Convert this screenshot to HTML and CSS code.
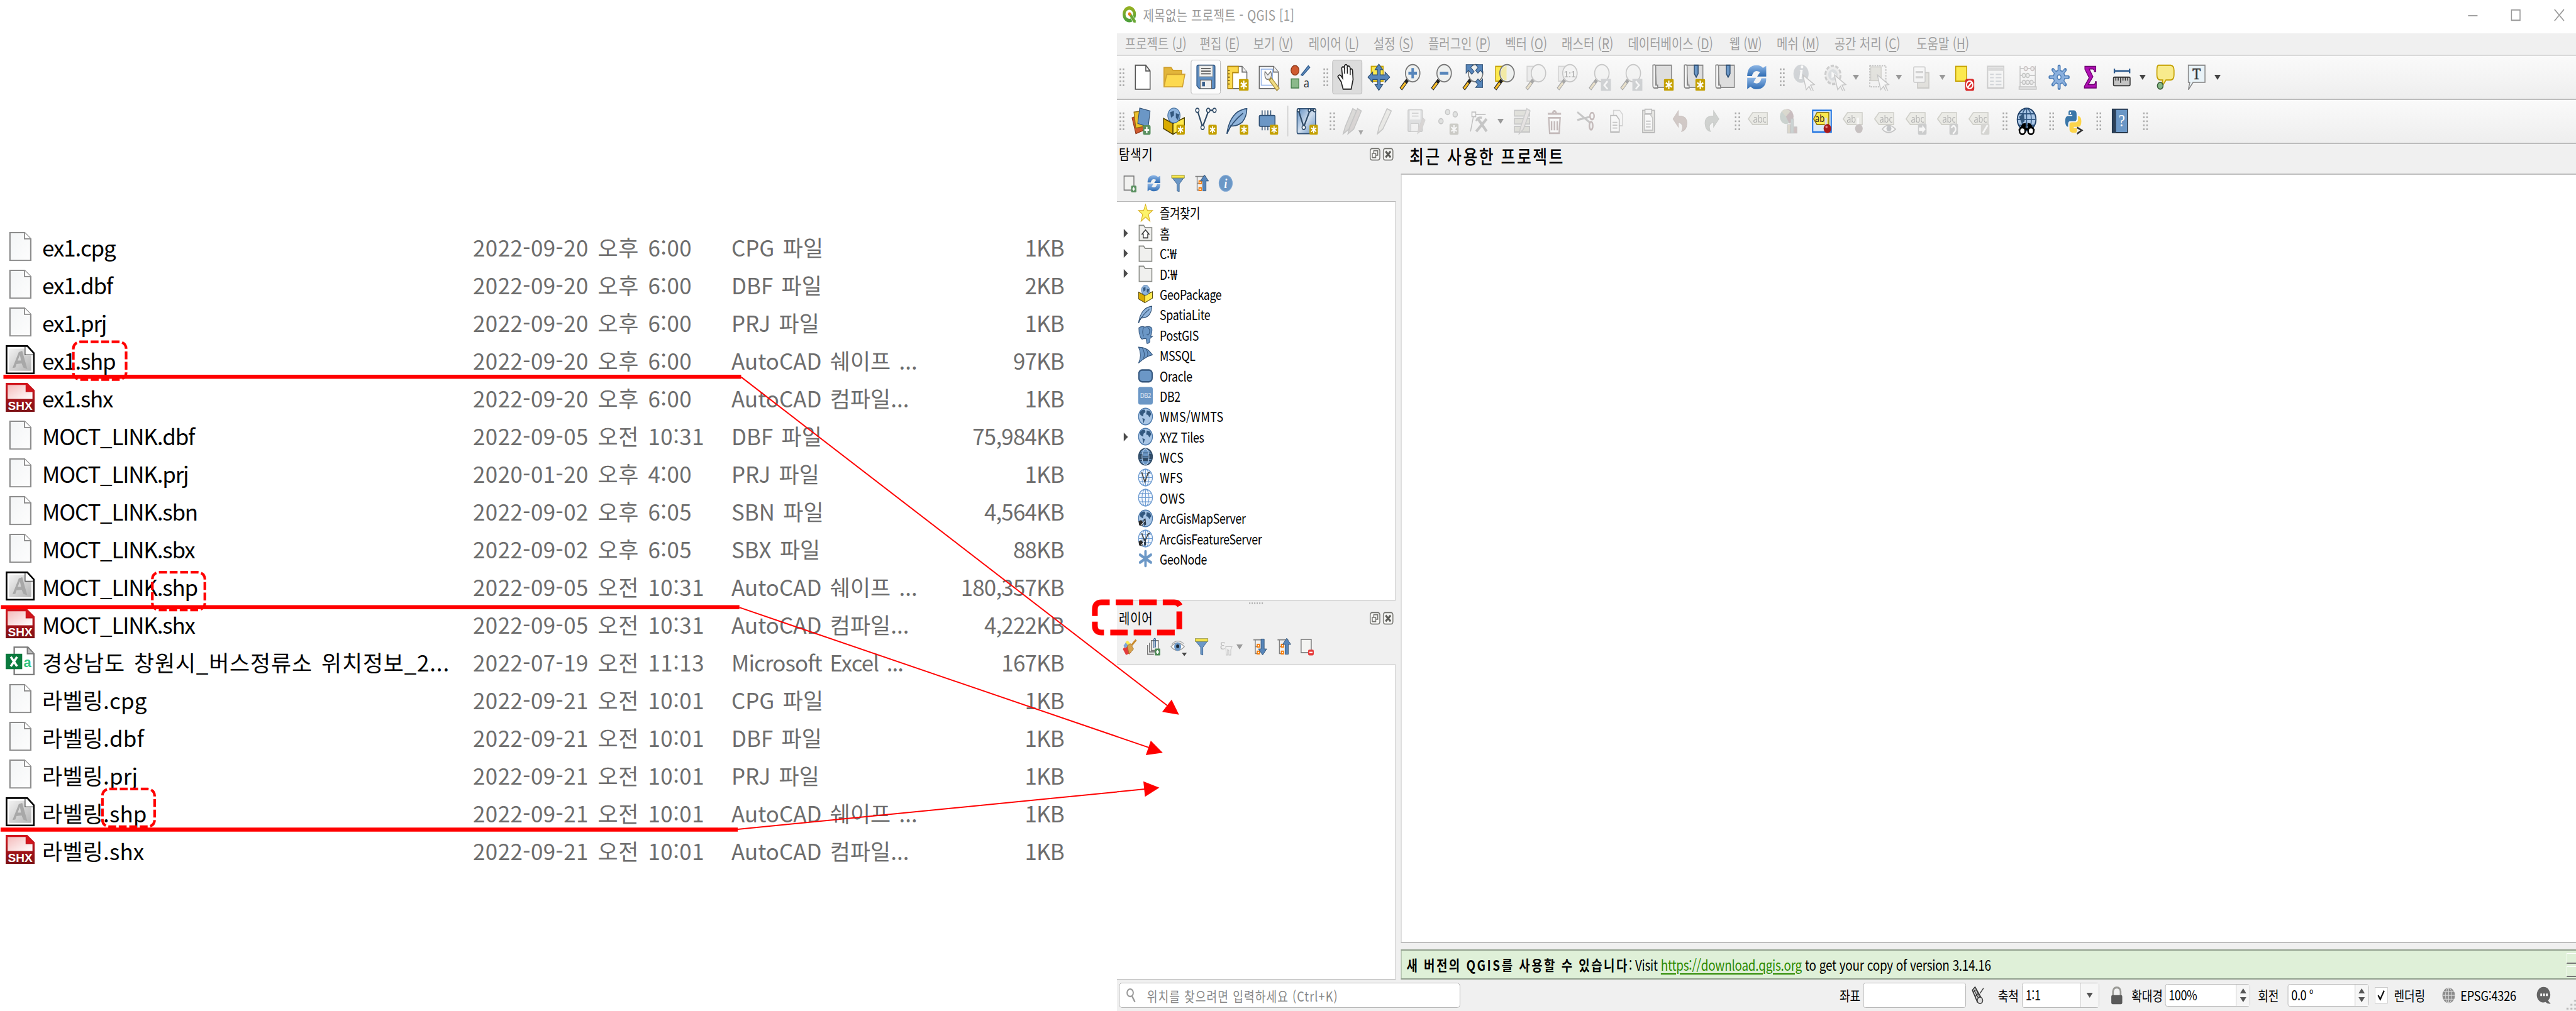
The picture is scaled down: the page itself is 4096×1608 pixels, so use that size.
FILE: index.html
```html
<!DOCTYPE html>
<html lang="ko">
<head>
<meta charset="utf-8">
<title>QGIS</title>
<link rel="stylesheet" href="styles.css">
</head>
<body>
<svg class="defs" width="0" height="0">
  <defs>
    <linearGradient id="g-doc" x1="0" y1="0" x2="1" y2="1"><stop offset="0" stop-color="#f3f5f6"/><stop offset="1" stop-color="#fdfdfd"/></linearGradient>
    <linearGradient id="g-shp" x1="0" y1="0" x2="1" y2="1"><stop offset="0" stop-color="#f2f2f2"/><stop offset="1" stop-color="#b4b4b4"/></linearGradient>
    <linearGradient id="g-shx" x1="0" y1="0" x2="1" y2="1"><stop offset="0" stop-color="#f4bcbc"/><stop offset="1" stop-color="#fff"/></linearGradient>
    <linearGradient id="g-red" x1="0" y1="0" x2="0" y2="1"><stop offset="0" stop-color="#d4141c"/><stop offset="1" stop-color="#7c1216"/></linearGradient>
    <linearGradient id="g-vec" x1="0" y1="0" x2="1" y2="1"><stop offset="0" stop-color="#5d8cc0"/><stop offset=".5" stop-color="#cfdded"/><stop offset="1" stop-color="#5d8cc0"/></linearGradient>
    <linearGradient id="g-ref" x1="0" y1="0" x2="0" y2="1"><stop offset="0" stop-color="#8db6e6"/><stop offset="1" stop-color="#2f6cb3"/></linearGradient>
    <linearGradient id="g-q" x1="0" y1="0" x2="0" y2="1"><stop offset="0" stop-color="#93b023"/><stop offset="1" stop-color="#4fa03a"/></linearGradient>
  </defs>
  <symbol id="file" viewBox="0 0 51 51"><path d="M7.500 1H33L44 12V50H7.500Z" fill="url(#g-doc)" stroke="#8c8c8c" stroke-width="2.400"/><path d="M33 1V12H44" fill="#fff" stroke="#8c8c8c" stroke-width="2"/></symbol>
  <symbol id="shp" viewBox="0 0 51 51"><path d="M1.500 1.500H38L49.500 14V49.500H1.500Z" fill="#fff" stroke="#000" stroke-width="3"/><path d="M6 6H33V18H45V45H6Z" fill="url(#g-shp)"/><path d="M34 3V17H48" fill="#fff" stroke="#444" stroke-width="1.500"/><path d="M12 40L23 12L29 10L38 42L31 39L28 32L19 33L17 39Z M21 27H27L25 17Z" fill="#a8a8a8" fill-rule="evenodd"/></symbol>
  <symbol id="shx" viewBox="0 0 51 51"><path d="M0 0H38L51 13V51H0Z" fill="url(#g-red)"/><path d="M3.500 3.500H35V16H47V28H3.500Z" fill="url(#g-shx)"/><path d="M36 1L50 15H36Z" fill="#d4141c"/></symbol>

  <symbol id="new" viewBox="0 0 10 10"><rect width="10" height="10" rx="1.500" fill="#c4a000"/><path d="M5 1.500V8.500M2 3.200L8 6.800M8 3.200L2 6.800" stroke="#fff" stroke-width="1.300"/></symbol>
  <symbol id="lens" viewBox="0 0 24 24"><path d="M9 14.500L2 22.500" stroke="#222" stroke-width="3.400"/><path d="M7 17L2.400 22" stroke="#fbc02d" stroke-width="2"/><circle cx="14.500" cy="8.500" r="7.600" fill="#eef0ef" stroke="#777" stroke-width="1.100"/></symbol>
  <symbol id="page" viewBox="0 0 24 24"><path d="M2 2.500H17L22 7.500V22H2Z" fill="#fff" stroke="#6b6b6b"/><path d="M17 2.500V7.500H22" fill="#eee" stroke="#6b6b6b"/></symbol>
  <symbol id="book" viewBox="0 0 24 24"><path d="M4 1.500H21.500V21H6Z" fill="#dedede" stroke="#888"/><path d="M2 1.500Q5 .5 5 3V19H7V21.500H3.500Q2 21.500 2 19Z" fill="#f3f3f3" stroke="#888"/></symbol>
  <symbol id="refresh" viewBox="0 0 24 24"><path d="M2 11Q2 1.500 12 1.500Q16 1.500 18.500 3.800L22 2V11.500H12.500L15.500 7.500Q9 4.500 7 11Z" fill="url(#g-ref)"/><path d="M22 13Q22 22.500 12 22.500Q8 22.500 5.500 20.200L2 22.500V12.500H11.500L8.500 16.500Q15 19.500 17 13Z" fill="url(#g-ref)"/></symbol>
  <symbol id="globe" viewBox="0 0 24 24"><circle cx="12" cy="12" r="11" fill="#a9c6e6" stroke="#4a78ab" stroke-width="1.300"/><path d="M3 6Q7 2 11 3L12 6L9 8L8 12L4 10ZM14 4Q20 4 21 9L18 13L16 10L13 9ZM7 14L11 15L9 21Z" fill="#33587f"/></symbol>
  <symbol id="grid" viewBox="0 0 24 24"><circle cx="12" cy="12" r="11" fill="#f2f7fd" stroke="#6d9bd1" stroke-width="1.300"/><path d="M1 12H23M12 1V23M3 6.500H21M3 17.500H21" stroke="#6d9bd1" fill="none"/><ellipse cx="12" cy="12" rx="5.500" ry="11" fill="none" stroke="#6d9bd1"/></symbol>
  <symbol id="arc" viewBox="0 0 24 24"><path d="M1 16L5 14L8 17L7 22L2 21Z" fill="#2b2b2b"/><path d="M9 13L12 12L13 20L10 22Z" fill="#2b3c50"/><path d="M5 21L11 15" stroke="#eee"/></symbol>
  <symbol id="box" viewBox="0 0 24 24"><path d="M1 9.500L11 14V23.500L1 18.500Z" fill="#d9ab00" stroke="#4d4000" stroke-width=".9"/><path d="M11 14L23 9V17.500L11 23.500Z" fill="#ffe94e" stroke="#4d4000" stroke-width=".9"/><circle cx="12" cy="7" r="6.500" fill="#8db3dc" stroke="#44709f" stroke-width=".7"/><path d="M8 4L12 3L12 7L9 9ZM14 5L18 6L16 11L14 9Z" fill="#33587f"/></symbol>
  <symbol id="feather" viewBox="0 0 24 24"><path d="M1 23Q3 10 12 4Q18 1 22 1Q22 8 17 13Q11 17 5 16Z" fill="#8fb3da" stroke="#2f4f73"/><path d="M1 23Q6 13 18 5" stroke="#2f4f73" fill="none"/></symbol>
  <symbol id="vee" viewBox="0 0 24 24"><path d="M3 2.500L8.500 17L15 2.500H21" fill="none" stroke="#2f4a66" stroke-width="1.400"/><g fill="#fff" stroke="#2f4a66"><circle cx="3" cy="2.500" r="1.800"/><circle cx="8.500" cy="17.500" r="1.800"/><circle cx="14.500" cy="2.500" r="1.800"/><circle cx="21" cy="2.500" r="1.800"/></g></symbol>
  <symbol id="folder" viewBox="0 0 24 24"><path d="M2 2H9L11.500 5H22V22H2Z" fill="#f0f0ee" stroke="#888a85" stroke-width="1.500"/></symbol>
  <symbol id="funnel" viewBox="0 0 24 24"><path d="M2 4H22L14 13V23L10.500 22V13Z" fill="#6b97c6" stroke="#3a6190" stroke-width=".8"/><rect x="2" y="1.500" width="20" height="3.500" fill="#fce94f" stroke="#8a8a30" stroke-width=".8"/></symbol>
  <symbol id="tag" viewBox="0 0 24 24"><path d="M1 10L5.500 4.500H21V15H5.500Z" fill="#dcdcb8" stroke="#909068"/></symbol>
  <symbol id="upbox" viewBox="0 0 24 24"><path d="M2 3H19M5 3V21H9M5 12H9" stroke="#808080" fill="none" stroke-width="1.300"/><g fill="#fff" stroke="#f57900" stroke-width="1.600"><rect x="8" y="9" width="3.500" height="3.500"/><rect x="8" y="18" width="3.500" height="3.500"/></g></symbol>
  <symbol id="cursor" viewBox="0 0 24 24"><path d="M11 10L23 18.500L19 19L22 24L20 24.500L17.500 20L14.500 23Z" fill="#fff" stroke="#777" stroke-width=".9"/></symbol>
  <symbol id="float" viewBox="0 0 22 22"><rect x="1.300" y="1.300" width="19.400" height="19.400" rx="4" fill="#f6f6f4" stroke="#747470" stroke-width="1.900"/><path d="M8.500 9V5H16.500V12.500H13M5.500 9.500H12.500V16.500H5.500Z" fill="none" stroke="#747470" stroke-width="1.800"/></symbol>
  <symbol id="shut" viewBox="0 0 22 22"><rect x="1.300" y="1.300" width="19.400" height="19.400" rx="4" fill="#f6f6f4" stroke="#747470" stroke-width="1.900"/><path d="M6 6L16 16M16 6L6 16" stroke="#5c5c58" stroke-width="3.600"/></symbol>
</svg>

<main class="stage">
  <section class="files">
    <div class="row"><svg><use href="#file"/></svg><span class="name">ex1.cpg</span><span class="date">2022-09-20 오후 6:00</span><span class="type">CPG 파일</span><span class="size">1KB</span></div>
    <div class="row"><svg><use href="#file"/></svg><span class="name">ex1.dbf</span><span class="date">2022-09-20 오후 6:00</span><span class="type">DBF 파일</span><span class="size">2KB</span></div>
    <div class="row"><svg><use href="#file"/></svg><span class="name">ex1.prj</span><span class="date">2022-09-20 오후 6:00</span><span class="type">PRJ 파일</span><span class="size">1KB</span></div>
    <div class="row"><svg><use href="#shp"/></svg><span class="name">ex1.shp</span><span class="date">2022-09-20 오후 6:00</span><span class="type">AutoCAD 쉐이프 ...</span><span class="size">97KB</span></div>
    <div class="row"><svg viewBox="0 0 51 51"><use href="#shx" width="51" height="51"/><text x="25.500" y="47.500" text-anchor="middle" class="t-shx">SHX</text></svg><span class="name">ex1.shx</span><span class="date">2022-09-20 오후 6:00</span><span class="type">AutoCAD 컴파일...</span><span class="size">1KB</span></div>
    <div class="row"><svg><use href="#file"/></svg><span class="name">MOCT_LINK.dbf</span><span class="date">2022-09-05 오전 10:31</span><span class="type">DBF 파일</span><span class="size">75,984KB</span></div>
    <div class="row"><svg><use href="#file"/></svg><span class="name">MOCT_LINK.prj</span><span class="date">2020-01-20 오후 4:00</span><span class="type">PRJ 파일</span><span class="size">1KB</span></div>
    <div class="row"><svg><use href="#file"/></svg><span class="name">MOCT_LINK.sbn</span><span class="date">2022-09-02 오후 6:05</span><span class="type">SBN 파일</span><span class="size">4,564KB</span></div>
    <div class="row"><svg><use href="#file"/></svg><span class="name">MOCT_LINK.sbx</span><span class="date">2022-09-02 오후 6:05</span><span class="type">SBX 파일</span><span class="size">88KB</span></div>
    <div class="row"><svg><use href="#shp"/></svg><span class="name">MOCT_LINK.shp</span><span class="date">2022-09-05 오전 10:31</span><span class="type">AutoCAD 쉐이프 ...</span><span class="size">180,357KB</span></div>
    <div class="row"><svg viewBox="0 0 51 51"><use href="#shx" width="51" height="51"/><text x="25.500" y="47.500" text-anchor="middle" class="t-shx">SHX</text></svg><span class="name">MOCT_LINK.shx</span><span class="date">2022-09-05 오전 10:31</span><span class="type">AutoCAD 컴파일...</span><span class="size">4,222KB</span></div>
    <div class="row"><svg viewBox="0 0 51 51"><path d="M15 1.500H39L49.500 13V49.500H15Z" fill="#fff" stroke="#7b7b7b" stroke-width="2.600"/><path d="M38 2V13H49" fill="#bbb" stroke="#777" stroke-width="2"/><rect y="13" width="29" height="27" fill="#0a7a3e"/><path d="M9 18.500L20 35M20 18.500L9 35" stroke="#fff" stroke-width="4"/><text x="38" y="36" text-anchor="middle" class="t-csv">a</text></svg><span class="name long">경상남도 창원시_버스정류소 위치정보_2...</span><span class="date">2022-07-19 오전 11:13</span><span class="type latin">Microsoft Excel ...</span><span class="size">167KB</span></div>
    <div class="row"><svg><use href="#file"/></svg><span class="name ko">라벨링.cpg</span><span class="date">2022-09-21 오전 10:01</span><span class="type">CPG 파일</span><span class="size">1KB</span></div>
    <div class="row"><svg><use href="#file"/></svg><span class="name ko">라벨링.dbf</span><span class="date">2022-09-21 오전 10:01</span><span class="type">DBF 파일</span><span class="size">1KB</span></div>
    <div class="row"><svg><use href="#file"/></svg><span class="name ko">라벨링.prj</span><span class="date">2022-09-21 오전 10:01</span><span class="type">PRJ 파일</span><span class="size">1KB</span></div>
    <div class="row"><svg><use href="#shp"/></svg><span class="name ko">라벨링.shp</span><span class="date">2022-09-21 오전 10:01</span><span class="type">AutoCAD 쉐이프 ...</span><span class="size">1KB</span></div>
    <div class="row"><svg viewBox="0 0 51 51"><use href="#shx" width="51" height="51"/><text x="25.500" y="47.500" text-anchor="middle" class="t-shx">SHX</text></svg><span class="name ko">라벨링.shx</span><span class="date">2022-09-21 오전 10:01</span><span class="type">AutoCAD 컴파일...</span><span class="size">1KB</span></div>
  </section>

  <section class="qgis">
    <header class="titlebar">
      <svg class="logo" viewBox="0 0 30 30"><circle cx="14" cy="14" r="11" fill="none" stroke="url(#g-q)" stroke-width="6"/><path d="M13 12L17 11L28 25V29H23L14 17Z" fill="#6aa834" stroke="#fff" stroke-width=".8"/><circle cx="14.500" cy="13.500" r="3" fill="#ee7913"/></svg>
      <span class="caption">제목없는 프로젝트 - QGIS [1]</span>
      <svg class="win" viewBox="0 0 20 20"><path d="M0 11H20" stroke="#999" stroke-width="2"/></svg>
      <svg class="win" viewBox="0 0 20 20"><path d="M1 1H19V19H1Z" stroke="#999" stroke-width="2" fill="none"/></svg>
      <svg class="win" viewBox="0 0 20 20"><path d="M0 0L20 20M20 0L0 20" stroke="#999" stroke-width="2"/></svg>
    </header>
    <nav class="menu">
      <span>프로젝트 (<u>J</u>)</span><span>편집 (<u>E</u>)</span><span>보기 (<u>V</u>)</span><span>레이어 (<u>L</u>)</span><span>설정 (<u>S</u>)</span><span>플러그인 (<u>P</u>)</span><span>벡터 (<u>O</u>)</span><span>래스터 (<u>R</u>)</span><span>데이터베이스 (<u>D</u>)</span><span>웹 (<u>W</u>)</span><span>메쉬 (<u>M</u>)</span><span>공간 처리 (<u>C</u>)</span><span>도움말 (<u>H</u>)</span>
    </nav>

    <div class="toolbar">
      <i class="grip first"></i>
      <b><svg viewBox="0 0 24 24"><path d="M4.500 1.500H15.500L20 6.500V22.500H4.500Z" fill="#fff" stroke="#555"/><path d="M15.500 1.500V6.500H20" fill="none" stroke="#555"/></svg></b>
      <b><svg viewBox="0 0 24 24"><path d="M1.500 20.500V3.500H9L11 6H20V20.500Z" fill="#e2b53a" stroke="#cf9d27"/><path d="M1.500 20.500L4.500 9.500H23.500L21 20.500Z" fill="#fcd94f" stroke="#cfa030"/></svg></b>
      <b class="boxed"><svg viewBox="0 0 24 24"><path d="M2.500 3Q2.500 1.500 4 1.500H20Q21.500 1.500 21.500 3V21Q21.500 22 20 22H5L2.500 19.500Z" fill="#5f8fc3" stroke="#395f8b"/><rect x="5" y="2" width="14" height="9.500" fill="#eeeeec" stroke="#999" stroke-width=".5"/><path d="M7 4.500H17M7 6.700H17M7 9H17" stroke="#555"/><rect x="6" y="14.500" width="12" height="7.500" fill="#eee" stroke="#555" stroke-width=".6"/><rect x="8" y="16" width="3" height="4" fill="#395f8b"/></svg></b>
      <b><svg viewBox="0 0 24 24"><use href="#page" width="24" height="24"/><path d="M2 2.500H13V8H7V22H2Z" fill="#fcd94f" stroke="#b58a10"/><path d="M2 6H4M2 9H4M2 12H4M2 15H4M2 18H4" stroke="#7c6210"/><use href="#new" x="13.500" y="13.500" width="10.500" height="10.500"/></svg></b>
      <b><svg viewBox="0 0 24 24"><use href="#page" width="24" height="24"/><path d="M4 5H16V19H4Z" fill="none" stroke="#8fb0e8" stroke-width=".8"/><path d="M8 7L11 10L14 7Q16 11 13 13.500L10 14Q7 12 8 7Z" fill="#eee" stroke="#777" stroke-width=".8"/><path d="M13 13L22 23" stroke="#a38a3c" stroke-width="4"/><path d="M14 14L21.500 22.500" stroke="#f0dc82" stroke-width="2.500"/></svg></b>
      <b><svg viewBox="0 0 24 24"><circle cx="6.500" cy="6" r="4.200" fill="#cf5a30" stroke="#8e3515" stroke-width=".8"/><path d="M13 10L20.500 2L22 3.500L14.500 10.500Z" fill="#6b97c6" stroke="#2f5c8f" stroke-width=".9"/><rect x="2.500" y="13.500" width="8" height="8" fill="#8bb98b" stroke="#3f7a45" stroke-width=".8"/><text x="18.500" y="21" text-anchor="middle" class="t-a">a</text></svg></b>
      <i class="grip"></i>
      <b class="pressed"><svg viewBox="0 0 24 24"><path d="M8 22.500L6 16L2.500 11.500Q3.500 9 6 11L7.500 13L6.500 4Q8 1.500 9.500 4L9.500 2Q11 0 12.500 2V3Q14.500 1 15.500 4V5Q18 4 18 7L18.500 14L16.500 22.500Z" fill="#fff" stroke="#222" stroke-width="1.100"/><path d="M9.500 4V9M12.500 3.500V9M15.500 5V10" stroke="#222"/></svg></b>
      <b><svg viewBox="0 0 24 24"><rect x="4" y="2.500" width="12.500" height="13" fill="#fce94f" stroke="#c4a000"/><path d="M12 .5L16 5.500H13.500V10H18.500V7.500L23.500 12L18.500 16.500V14H13.500V18.500H16L12 23.500L8 18.500H10.500V14H5.500V16.500L.5 12L5.500 7.500V10H10.500V5.500H8Z" fill="#5786bb" stroke="#2f4f73" stroke-width=".7"/></svg></b>
      <b><svg viewBox="0 0 24 24"><use href="#lens" width="24" height="24"/><path d="M14.500 4V13M10 8.500H19" stroke="#5786bb" stroke-width="2.600"/></svg></b>
      <b><svg viewBox="0 0 24 24"><use href="#lens" width="24" height="24"/><path d="M10 8.500H19" stroke="#5786bb" stroke-width="2.600"/></svg></b>
      <b><svg viewBox="0 0 24 24"><use href="#lens" width="24" height="24"/><path d="M4.500 1H12L9.500 3.500L13 7L10.500 9.500L7 6L4.500 8.500ZM22 1V8.500L19.500 6L17 8.500L14.500 6L17 3.500L14.500 1ZM22 21H14.500L17 18.500L14.500 16L17 13.500L19.500 16L22 13.500Z" fill="#5786bb" stroke="#2f4f73" stroke-width=".6"/></svg></b>
      <b><svg viewBox="0 0 24 24"><rect x="2.500" y="2.500" width="10" height="13" fill="#fce94f" stroke="#c4a000"/><use href="#lens" width="24" height="24"/><path d="M14 2V15Q8.500 14 8 8.500Q8.500 3 14 2Z" fill="#f2eaa5"/></svg></b>
      <b class="off"><svg viewBox="0 0 24 24"><rect x="2.500" y="2.500" width="10" height="13" fill="#ddd" stroke="#999"/><use href="#lens" width="24" height="24"/></svg></b>
      <b class="off"><svg viewBox="0 0 24 24"><rect x="2.500" y="2.500" width="10" height="13" fill="#ddd" stroke="#999"/><use href="#lens" width="24" height="24"/><text x="14.500" y="12" text-anchor="middle" class="t-11">1:1</text></svg></b>
      <b class="off"><svg viewBox="0 0 24 24"><use href="#lens" width="24" height="24"/><rect x="13.500" y="13.500" width="10.500" height="10.500" fill="#8c9aa8"/><path d="M20.500 15.500L17 19L20.500 22.500" stroke="#fff" stroke-width="1.600" fill="none"/></svg></b>
      <b class="off"><svg viewBox="0 0 24 24"><use href="#lens" width="24" height="24"/><rect x="13.500" y="13.500" width="10.500" height="10.500" fill="#8c9aa8"/><path d="M17 15.500L20.500 19L17 22.500" stroke="#fff" stroke-width="1.600" fill="none"/></svg></b>
      <b><svg viewBox="0 0 24 24"><use href="#book" width="24" height="24"/><use href="#new" x="13.500" y="13.500" width="10.500" height="10.500"/></svg></b>
      <b><svg viewBox="0 0 24 24"><use href="#book" width="24" height="24"/><path d="M12.500 1.500H16.500V9L14.500 12L12.500 9Z" fill="#6b97c6" stroke="#2f4f73"/><use href="#new" x="13.500" y="13.500" width="10.500" height="10.500"/></svg></b>
      <b><svg viewBox="0 0 24 24"><use href="#book" width="24" height="24"/><path d="M13 1.500H17V9L15 12L13 9Z" fill="#6b97c6" stroke="#2f4f73"/></svg></b>
      <b><svg viewBox="0 0 24 24"><use href="#refresh" width="24" height="24"/></svg></b>
      <i class="grip"></i>
      <b class="off"><svg viewBox="0 0 24 24"><circle cx="9" cy="9" r="8" fill="#8a9cb0"/><text x="9" y="14" text-anchor="middle" class="t-i">i</text><use href="#cursor" width="24" height="24"/></svg></b>
      <b class="off"><svg viewBox="0 0 24 24"><circle cx="9.500" cy="10" r="8" fill="#ddd" stroke="#888" stroke-width="2" stroke-dasharray="3.500 1.500"/><circle cx="9.500" cy="10" r="5" fill="#a5b5c5"/><path d="M8 7V13L13 10Z" fill="#fff"/><use href="#cursor" width="24" height="24"/></svg></b><em class="dim"></em>
      <b class="off"><svg viewBox="0 0 24 24"><rect x="3" y="2" width="17" height="18.500" fill="none" stroke="#555" stroke-dasharray="1.500 1"/><rect x="4" y="3" width="11" height="12" fill="#c8c3a5" stroke="#99957c"/><use href="#cursor" width="24" height="24"/></svg></b><em class="dim"></em>
      <b class="off"><svg viewBox="0 0 24 24"><rect x="8" y="8" width="12" height="13.500" fill="#c8c3a5" stroke="#86826c"/><rect x="4" y="3" width="12" height="13.500" rx="1" fill="#f6f6f6" stroke="#888"/><path d="M6 7.500H14M6 12H14" stroke="#999" stroke-width="1.800"/></svg></b><em class="dim"></em>
      <b><svg viewBox="0 0 24 24"><rect x="3" y="2.500" width="11.500" height="13" fill="#fce94f" stroke="#c4a000"/><rect x="13" y="13.500" width="9.500" height="10.500" rx="2" fill="#d92b2b"/><circle cx="17.700" cy="18.700" r="3.300" fill="none" stroke="#fff" stroke-width="1.300"/><path d="M15.500 21L20 16.500" stroke="#fff" stroke-width="1.300"/></svg></b>
      <b class="off"><svg viewBox="0 0 24 24"><rect x="3.500" y="2.500" width="17" height="19" fill="#f4f4f4" stroke="#888" stroke-width="1.200"/><path d="M4 5H20" stroke="#aaa" stroke-width="3"/><path d="M6 9.500H10M12 9.500H18M6 12.500H10M12 12.500H18M6 15.500H10M12 15.500H18M6 18.500H10M12 18.500H18" stroke="#8aa0b8"/></svg></b>
      <b class="off"><svg viewBox="0 0 24 24"><path d="M4 2V21M20 2V21M4 4.500H20M4 10.500H20M4 16.500H20" stroke="#777" fill="none"/><g fill="#ddd" stroke="#a06060"><circle cx="10" cy="4.500" r="1.800"/><circle cx="17" cy="4.500" r="1.800"/></g><g fill="#ddd" stroke="#708070"><circle cx="8" cy="10.500" r="1.800"/><circle cx="12" cy="10.500" r="1.800"/></g><g fill="#ddd" stroke="#777"><circle cx="8" cy="16.500" r="1.800"/><circle cx="12" cy="16.500" r="1.800"/><circle cx="16" cy="16.500" r="1.800"/></g><rect x="3" y="20.500" width="18" height="2" fill="#ddd" stroke="#777"/></svg></b>
      <b><svg viewBox="0 0 24 24"><g stroke="#4f7fb8" stroke-width="3.200" stroke-linecap="round"><path d="M12 2.500V21.500M2.500 12H21.500M5.500 5.500L18.500 18.500M18.500 5.500L5.500 18.500"/></g><circle cx="12" cy="12" r="6" fill="#8bb0de" stroke="#4f7fb8"/><path d="M12 3V21M3 12H21M6 6L18 18M18 6L6 18" stroke="#8bb0de" stroke-width="1.600" stroke-linecap="round"/><circle cx="12" cy="12" r="2" fill="#fff" stroke="#4f7fb8"/></svg></b>
      <b><svg viewBox="0 0 24 24"><path d="M6 2.500H17.500V7H16Q16 4.800 14 4.800H10.500L14.500 11.500L9.500 18.500H15Q17 18.500 17 16H18V21.500H5.500V20L10.500 12.500L6 5Z" fill="#b010b4" stroke="#6a006e" stroke-width=".8"/></svg></b>
      <b><svg viewBox="0 0 24 24"><path d="M4 6.500H20M4 4.500V8.500M20 4.500V8.500" stroke="#2f5c8f" stroke-width="1.500"/><rect x="3" y="12" width="17.500" height="7.500" rx="1" fill="#c4c4c4" stroke="#333"/><path d="M5.500 12V15M8 12V15M10.500 12V17M13 12V15M15.500 12V15M18 12V15" stroke="#333"/></svg></b><em></em>
      <b><svg viewBox="0 0 24 24"><path d="M5 1.500H18Q21.500 2 21.500 6V10Q21.500 14 18 14.500H13L9 20L9.500 14.500H7Q3.500 14 3.500 10V6Q3.500 2 5 1.500Z" fill="#f8eb8c" stroke="#c4a000" stroke-width="1.100"/><circle cx="7" cy="19.500" r="3" fill="#86b886" stroke="#3b5e3b"/></svg></b>
      <b><svg viewBox="0 0 24 24"><path d="M3.500 1.500H21V16.500H8.500L3.500 23L5 16.500H3.500Z" fill="#e9f3f8" stroke="#888"/><text x="12.200" y="14" text-anchor="middle" class="t-t">T</text></svg></b><em></em>
    </div>

    <div class="toolbar second">
      <i class="grip first"></i>
      <b><svg viewBox="0 0 24 24"><path d="M1 9L10 6L16 19L5 23Z" fill="#cf5a30" stroke="#8e3515" stroke-width=".7"/><path d="M3 4L13 3L17 16L5 18Z" fill="#eec22c" stroke="#8e6b10" stroke-width=".7"/><path d="M9 .5L20 3L18 17L7 14Z" fill="#6b97c6" stroke="#2f4f73" stroke-width=".7"/><rect x="12.500" y="15.500" width="8" height="8.500" rx="1.500" fill="#5a9060"/><path d="M16.500 17V22.500M14 19.700H19" stroke="#fff" stroke-width="1.500"/></svg></b>
      <b><svg viewBox="0 0 24 24"><use href="#box" width="24" height="24"/><use href="#new" x="14.500" y="15" width="9" height="9"/></svg></b>
      <b><svg viewBox="0 0 24 24"><use href="#vee" width="24" height="24"/><use href="#new" x="14.500" y="15" width="9" height="9"/></svg></b>
      <b><svg viewBox="0 0 24 24"><use href="#feather" width="24" height="24"/><use href="#new" x="14.500" y="15" width="9" height="9"/></svg></b>
      <b><svg viewBox="0 0 24 24"><path d="M5 2.500V20M8 2.500V20M11 2.500V20M14 2.500V20" stroke="#2f4f73"/><rect x="2" y="7" width="16.500" height="9.500" rx="1" fill="#6b97c6" stroke="#2f4f73"/><use href="#new" x="13" y="15" width="9" height="9"/></svg></b>
      <i class="rule"></i>
      <b><svg viewBox="0 0 24 24"><rect x="1.500" y="1" width="19.500" height="22" rx="1.500" fill="url(#g-vec)" stroke="#2f4f73"/><path d="M3 2.500L8.500 17L15 2.500H20" fill="none" stroke="#2f4a66" stroke-width="1.400"/><g fill="#fff" stroke="#2f4a66"><circle cx="3" cy="2.500" r="1.300"/><circle cx="8.500" cy="17.500" r="1.800"/><circle cx="14.500" cy="2.500" r="1.300"/><circle cx="20" cy="2.500" r="1.300"/></g><use href="#new" x="14.500" y="15" width="9" height="9"/></svg></b>
      <i class="grip wide"></i>
      <b class="off"><svg viewBox="0 0 24 24"><path d="M1 23L3 17L11 1L15 3L7 19Z" fill="#b0a8a0" stroke="#777"/><path d="M6 23L8 17L16 1L20 3L12 19Z" fill="#b59c98" stroke="#777"/><path d="M17 20H22L19.500 24Z" fill="#222"/></svg></b>
      <b class="off"><svg viewBox="0 0 24 24"><path d="M4 23L5.500 17L14 1L18.500 3L9.500 19Z" fill="#d8d6c0" stroke="#777"/></svg></b>
      <b class="off"><svg viewBox="0 0 24 24"><rect x="3" y="2" width="15" height="19" rx="1" fill="#b5bcc4" stroke="#888"/><rect x="5" y="2.500" width="11" height="8" fill="#eee"/><path d="M7 5H14M7 7.500H14" stroke="#999"/><rect x="6" y="14" width="8" height="7" fill="#eee" stroke="#888" stroke-width=".6"/><path d="M13 23L14 18L18.500 9L21 11L17 20Z" fill="#b59c98" stroke="#999" stroke-width=".6"/></svg></b>
      <b class="off"><svg viewBox="0 0 24 24"><g fill="#b9c4bb" stroke="#777"><circle cx="11" cy="4" r="2.300"/><circle cx="19" cy="6" r="2.300"/><circle cx="4" cy="12" r="2.300"/></g><rect x="13" y="14" width="9.500" height="10" rx="1.500" fill="#8c8968"/><path d="M17.700 15.500V22.500M14.800 17.200L20.600 20.800M20.600 17.200L14.800 20.800" stroke="#fff" stroke-width="1.300"/></svg></b>
      <b class="off"><svg viewBox="0 0 24 24"><path d="M2 21L5.500 6L18 6" fill="none" stroke="#666"/><rect x="3.500" y="4" width="4" height="4" fill="#fff" stroke="#666"/><path d="M8 21L19 10M10 10L19 21" stroke="#777" stroke-width="2.600"/><path d="M8 12Q9 8 14 9" stroke="#777" stroke-width="2" fill="none"/></svg></b><em class="dim"></em>
      <b class="off"><svg viewBox="0 0 24 24"><g fill="#bcbc9c" stroke="#777"><rect x="3" y="2.500" width="16" height="5"/><rect x="3" y="9.500" width="16" height="5"/><rect x="3" y="16.500" width="16" height="5"/></g><path d="M8 23L9.500 17L16 1L19.500 3L12.500 19Z" fill="#d8c3bf" stroke="#888"/></svg></b>
      <b class="off"><svg viewBox="0 0 24 24"><path d="M6 9H18L17 22.500H7Z" fill="#fff" stroke="#905050" stroke-width="1.500"/><path d="M9 12V20M12 12V20M15 12V20" stroke="#905050" stroke-width="1.600"/><path d="M5 5.500H19M10 5Q12 1 14 5" fill="none" stroke="#905050" stroke-width="1.700"/></svg></b>
      <b class="off"><svg viewBox="0 0 24 24"><path d="M3 4L16 13M3 11L17 8" stroke="#777" stroke-width="1.800"/><g fill="none" stroke="#905050" stroke-width="1.600"><ellipse cx="18.500" cy="7.500" rx="2.200" ry="3"/><ellipse cx="17.500" cy="16" rx="1.800" ry="3.500"/></g></svg></b>
      <b class="off"><svg viewBox="0 0 24 24"><path d="M8 2.500H14.500L17.500 6V16H8Z" fill="#f4f4f4" stroke="#999"/><path d="M5 7H11L14 10.500V21.500H5Z" fill="#fff" stroke="#555"/><path d="M7 13H12M7 15.500H12M7 18H12" stroke="#777"/></svg></b>
      <b class="off"><svg viewBox="0 0 24 24"><rect x="5.500" y="2.500" width="12.500" height="19.500" fill="#c9c9b5" stroke="#555"/><rect x="8" y="1.500" width="7" height="4" fill="#eee" stroke="#555"/><path d="M7.500 6H13.500L16 9V20H7.500Z" fill="#fff" stroke="#777"/><path d="M9 12H14M9 14.500H14M9 17H14" stroke="#777"/></svg></b>
      <b class="off"><svg viewBox="0 0 24 24"><path d="M4 10L9.500 3V7.500Q18.500 7 18.500 14Q18 20 13 21Q16 14 9.500 13V17Z" fill="#b07868" stroke="#a06858" stroke-width=".7"/></svg></b>
      <b class="off"><svg viewBox="0 0 24 24"><path d="M19 10L13.500 3V7.500Q4.500 7 4.500 14Q5 20 10 21Q7 14 13.500 13V17Z" fill="#8a9a8a" stroke="#7a8a7a" stroke-width=".7"/></svg></b>
      <i class="grip mid"></i>
      <b class="off"><svg viewBox="0 0 24 24"><use href="#tag" width="24" height="24"/><text x="13" y="13" text-anchor="middle" class="t-abc">abc</text></svg></b>
      <b class="off"><svg viewBox="0 0 24 24"><circle cx="7.500" cy="8" r="6.500" fill="#6fa088"/><path d="M7.500 8V1.500A6.500 6.500 0 0 1 11 14Z" fill="#a05060"/><path d="M7.500 8L3 3.500A6.500 6.500 0 0 1 12 3.500Z" fill="#b0a860"/><path d="M9 15H12V22.500H9Z" fill="#c0a860" stroke="#777" stroke-width=".6"/><path d="M12.500 10H15.500V22.500H12.500Z" fill="#6fa0a0" stroke="#777" stroke-width=".6"/><path d="M16 17H19V22.500H16Z" fill="#c06060" stroke="#777" stroke-width=".6"/></svg></b>
      <b><svg viewBox="0 0 24 24"><rect x="2.500" y="2.500" width="19.500" height="19" fill="#dbe9f8" stroke="#1c71e0" stroke-width="1.300"/><path d="M3.500 10L7 4.500H19.500V15H7Z" fill="#fce94f" stroke="#8f7700"/><text x="10" y="12.800" text-anchor="middle" class="t-ab">ab</text><path d="M16.500 9V16" stroke="#bbb" stroke-width="2.600"/><path d="M16.500 9V16" stroke="#fff" stroke-width="1.200"/><circle cx="18" cy="18.500" r="4" fill="#a81a1a"/><circle cx="17" cy="17" r="1.200" fill="#e08080"/></svg></b>
      <b class="off"><svg viewBox="0 0 24 24"><use href="#tag" width="24" height="24"/><text x="9.500" y="13" text-anchor="middle" class="t-abc">ab</text><path d="M16.500 9V16" stroke="#fff" stroke-width="2.400"/><circle cx="17.500" cy="18.500" r="4" fill="#8f6a6a"/></svg></b>
      <b class="off"><svg viewBox="0 0 24 24"><use href="#tag" width="24" height="24"/><text x="13" y="13" text-anchor="middle" class="t-abc">abc</text><path d="M9 19Q15 12 23 19Q15 25 9 19Z" fill="#fff" stroke="#777"/><circle cx="16" cy="18.500" r="2.600" fill="#667788"/></svg></b>
      <b class="off"><svg viewBox="0 0 24 24"><use href="#tag" width="24" height="24"/><text x="13" y="13" text-anchor="middle" class="t-abc">abc</text><rect x="13.500" y="14" width="9" height="10" rx="1.500" fill="#888c90"/><path d="M14.500 17.500H18V15.500L21.500 19L18 22.500V20.500H14.500Z" fill="#fff"/></svg></b>
      <b class="off"><svg viewBox="0 0 24 24"><use href="#tag" width="24" height="24"/><text x="13" y="13" text-anchor="middle" class="t-abc">abc</text><rect x="13.500" y="14" width="9" height="10" rx="1.500" fill="#888c90"/><path d="M15.500 18Q18 14 20 18Q20.500 21 17 23" fill="none" stroke="#fff" stroke-width="1.500"/></svg></b>
      <b class="off"><svg viewBox="0 0 24 24"><use href="#tag" width="24" height="24"/><text x="13" y="13" text-anchor="middle" class="t-abc">abc</text><rect x="13.500" y="14" width="9" height="10" rx="1.500" fill="#a8a490"/><path d="M15.500 22.500L20.500 15.500" stroke="#fff" stroke-width="1.800"/></svg></b>
      <i class="grip mid"></i>
      <b><svg viewBox="0 0 24 24"><circle cx="12" cy="10.500" r="9.800" fill="#a9c6e6" stroke="#1f3f66" stroke-width="1.200"/><path d="M2.500 10.500H21.500M4 5.500H20M4 15.500H20M12 1V20" stroke="#2f5580"/><ellipse cx="12" cy="10.500" rx="5" ry="9.500" fill="none" stroke="#2f5580"/><path d="M4 8L9 5L10 12L7 14Z" fill="#33587f"/><path d="M8 14L11 13.500V18H13V13.500L16 14L21 20H3Z" fill="#000"/><circle cx="7.500" cy="20.500" r="3" fill="#fff" stroke="#000" stroke-width="1.600"/><circle cx="16.500" cy="20.500" r="3" fill="#fff" stroke="#000" stroke-width="1.600"/></svg></b>
      <i class="grip mid"></i>
      <b><svg viewBox="0 0 24 24"><path d="M8 2.500H13Q15.500 3 15.500 6V10Q15.500 12 13 12H9Q6.500 12 6.500 15V17Q3.500 16.500 3.500 12Q3.500 7.500 6.500 7.500H11V6.500H7V4Q7 3 8 2.500Z" fill="#3a76a8"/><path d="M15 22H11Q8 21.500 8 19V15Q8 13 10.500 13H14Q17 13 17 10V7.500Q20.500 8 20.500 12Q20.500 17 17 17H12.500V18H16V20.500Z" fill="#fcd44a"/><circle cx="9" cy="4.800" r=".8" fill="#fff"/><path d="M16 17.500L21 20L16 23" fill="none" stroke="#333" stroke-width="1.500"/></svg></b>
      <i class="grip mid"></i>
      <b><svg viewBox="0 0 24 24"><rect x="4" y="1.500" width="16" height="20.500" fill="#6b97c6" stroke="#1d2f44"/><rect x="4" y="1.500" width="4" height="20.500" fill="#2c4058"/><text x="14" y="16.500" text-anchor="middle" class="t-q">?</text></svg></b>
      <i class="grip mid"></i>
    </div>

    <div class="work">
      <aside class="docks">
        <section class="dock browser">
          <div class="docktitle"><span>탐색기</span><svg><use href="#float"/></svg><svg><use href="#shut"/></svg></div>
          <div class="docktools">
            <svg viewBox="0 0 24 24"><path d="M3 2.500H18.500V21H3Z" fill="#f2f2f0" stroke="#777" stroke-width="1.400"/><rect x="14" y="15" width="8.500" height="9" rx="1.500" fill="#5a9060"/><path d="M18.200 17V22M16 19.500H20.500" stroke="#fff" stroke-width="1.400"/></svg>
            <svg><use href="#refresh"/></svg>
            <svg><use href="#funnel"/></svg>
            <svg viewBox="0 0 24 24"><use href="#upbox" width="24" height="24"/><path d="M16.500 1L23 9H19V22H14V9H10Z" fill="#5786bb" stroke="#2f4f73" stroke-width=".8"/></svg>
            <svg viewBox="0 0 24 24"><circle cx="12" cy="12" r="10.500" fill="#6b97c6" stroke="#7fa7d3"/><text x="12" y="18.500" text-anchor="middle" class="t-i">i</text></svg>
          </div>
          <ul class="tree">
            <li><svg viewBox="0 0 24 24"><path d="M12 1L15 9H23L16.500 14L19 23L12 17.500L5 23L7.500 14L1 9H9Z" fill="#fdf36a" stroke="#d8b020"/></svg>즐겨찾기</li>
            <li class="more"><svg viewBox="0 0 24 24"><use href="#folder" width="24" height="24"/><path d="M6.500 13.500L12 8L17.500 13.500H15.500V18.500H8.500V13.500Z" fill="#fff" stroke="#333" stroke-width="1.300"/></svg>홈</li>
            <li class="more"><svg><use href="#folder"/></svg>C:<span class="won">₩</span></li>
            <li class="more"><svg><use href="#folder"/></svg>D:<span class="won">₩</span></li>
            <li><svg><use href="#box"/></svg>GeoPackage</li>
            <li><svg><use href="#feather"/></svg>SpatiaLite</li>
            <li><svg viewBox="0 0 24 24"><path d="M1.500 3Q6 0 11 2Q18 0 22 3Q23 8 20 14H23L19 17V21Q17 24 14 23L13 17H9Q6 19 4 15Q1 9 1.500 3Z" fill="#6b97c6" stroke="#36587f"/><path d="M9 2.500Q6 8 9 14M15 2.500Q20 4 18 10Q16 14 14 11" fill="none" stroke="#36587f"/></svg>PostGIS</li>
            <li><svg viewBox="0 0 24 24"><path d="M1 1Q15 1 23 11Q12 13 1 22Q7 11 1 1Z" fill="#6b97c6" stroke="#36587f"/><path d="M7 2Q12 9 9 16M13 3.500Q17 9 15 13" stroke="#36587f" fill="none"/></svg>MSSQL</li>
            <li><svg viewBox="0 0 24 24"><rect x="1.500" y="4.500" width="21" height="15.500" rx="5" fill="#6b97c6" stroke="#36587f" stroke-width="2"/></svg>Oracle</li>
            <li><svg viewBox="0 0 24 24"><rect x=".5" y=".5" width="23" height="23" rx="3" fill="#6b97c6"/><text x="12" y="15" text-anchor="middle" class="t-db2">DB2</text></svg>DB2</li>
            <li class="wide"><svg><use href="#globe"/></svg>WMS/WMTS</li>
            <li class="more"><svg><use href="#globe"/></svg>XYZ Tiles</li>
            <li class="wide"><svg viewBox="0 0 24 24"><circle cx="12" cy="12" r="10.800" fill="#6b97c6" stroke="#2f4a66" stroke-width="1.600"/><path d="M2 12H22M3.500 7H20.500M3.500 17H20.500" stroke="#2f4a66"/><path d="M2 8H8V15H2ZM16 8H22V15H16ZM8 13H16V17H8Z" fill="#2f4a66"/><ellipse cx="12" cy="12" rx="5.500" ry="10.500" fill="none" stroke="#b8d0ea"/></svg>WCS</li>
            <li class="wide"><svg viewBox="0 0 24 24"><use href="#grid" width="24" height="24"/><path d="M6 5L11 18L16 6L19 5" stroke="#444" fill="none" stroke-width="1.600"/></svg>WFS</li>
            <li class="wide"><svg><use href="#grid"/></svg>OWS</li>
            <li><svg viewBox="0 0 24 24"><use href="#globe" width="24" height="24"/><use href="#arc" width="24" height="24"/></svg>ArcGisMapServer</li>
            <li><svg viewBox="0 0 24 24"><use href="#grid" width="24" height="24"/><path d="M6 5L11 16L16 6L19 5" stroke="#444" fill="none" stroke-width="1.600"/><use href="#arc" width="24" height="24"/></svg>ArcGisFeatureServer</li>
            <li><svg viewBox="0 0 24 24"><path d="M12 2.500V21.500M3.500 7L20.500 17M20.500 7L3.500 17" stroke="#6b97c6" stroke-width="3.800" stroke-linecap="round"/></svg>GeoNode</li>
          </ul>
        </section>
        <section class="dock layers">
          <div class="splitdots"></div>
          <div class="docktitle"><span>레이어</span><svg><use href="#float"/></svg><svg><use href="#shut"/></svg></div>
          <div class="docktools">
            <svg viewBox="0 0 24 24"><path d="M1 15L9 8L14 20L6 23Z" fill="#e33c3c"/><path d="M2 11L7 5L12 9L5 14Z" fill="#7ea6d8"/><path d="M5 6L9 4L13 8L9 10Z" fill="#fce94f"/><path d="M8 11L13 8L18 15L11 22Z" fill="#d9a24c" stroke="#9c6a1e" stroke-width=".7"/><path d="M15 10L22 3" stroke="#c98a2c" stroke-width="2.800"/></svg>
            <svg viewBox="0 0 24 24"><path d="M2 10V22H12M5 7V19H14M8 4H19V17H8Z" fill="none" stroke="#777" stroke-width="1.400"/><path d="M12 14V2Q13.500 0 14.500 2V13" fill="none" stroke="#2f5c8f" stroke-width="1.200"/><rect x="13.500" y="14.500" width="8.500" height="9" rx="1" fill="#4c8a55"/><path d="M17.700 16.500V21.500M15.500 19H20" stroke="#fff" stroke-width="1.600"/></svg>
            <svg viewBox="0 0 24 24"><path d="M1 12Q11 2 22 12Q11 22 1 12Z" fill="#fff" stroke="#999" stroke-width="1.200"/><path d="M2 9Q11 1 21 8" fill="none" stroke="#aaa"/><circle cx="11.500" cy="12" r="5.500" fill="#6b97c6"/><circle cx="11.500" cy="11.500" r="2.400" fill="#1c2733"/><path d="M18 20H26L22 24.500Z" fill="#444"/></svg>
            <svg><use href="#funnel"/></svg>
            <svg class="off" viewBox="0 0 24 24"><text x="7" y="16" text-anchor="middle" class="t-eps">ε</text><path d="M12 12H22L20 16V23H17V17L15 16V23H13Z" fill="none" stroke="#777"/></svg>
            <em class="dim"></em>
            <svg viewBox="0 0 24 24"><use href="#upbox" width="24" height="24"/><path d="M16.500 23L23 15H19V2H14V15H10Z" fill="#5786bb" stroke="#2f4f73" stroke-width=".8"/></svg>
            <svg viewBox="0 0 24 24"><use href="#upbox" width="24" height="24"/><path d="M16.500 1L23 9H19V22H14V9H10Z" fill="#5786bb" stroke="#2f4f73" stroke-width=".8"/></svg>
            <svg viewBox="0 0 24 24"><path d="M2 2.500H18V20H2Z" fill="#f4f4f2" stroke="#777" stroke-width="1.400"/><rect x="13" y="16" width="9" height="7.500" rx="2" fill="#e63b3b"/><path d="M15 19.700H20" stroke="#fff" stroke-width="2"/></svg>
          </div>
          <div class="layerbox"></div>
        </section>
      </aside>
      <section class="center">
        <h1>최근 사용한 프로젝트</h1>
        <div class="recent"></div>
        <div class="message">
          <p><strong>새 버전의 QGIS를 사용할 수 있습니다</strong>: <span>Visit</span> <a>https://download.qgis.org</a> <span>to get your copy of version 3.14.16</span></p>
          <div class="btns"><i></i><i></i></div>
        </div>
      </section>
    </div>

    <footer class="status">
      <div class="locator"><svg viewBox="0 0 20 28"><circle cx="8" cy="10" r="6.500" fill="none" stroke="#999" stroke-width="2.600"/><path d="M12 16L18 26" stroke="#999" stroke-width="3"/></svg><span>위치를 찾으려면 입력하세요 (Ctrl+K)</span></div>
      <span class="lab l1">좌표</span><div class="field f1"></div>
      <svg class="s1" viewBox="0 0 30 36"><path d="M3 8L9 2L24 24L14 30Z" fill="#ccc" stroke="#333" stroke-width="2"/><path d="M7 8L19 27M11 6L21 24M4 13L10 8M9 20L15 15" stroke="#333" stroke-width="1.500"/><circle cx="20" cy="27" r="6" fill="#ddd" stroke="#444" stroke-width="2"/><path d="M20 14L28 4" stroke="#444" stroke-width="2"/></svg>
      <span class="lab l2">축척</span><div class="field f2"><span>1:1</span><div class="drop"><em></em></div></div>
      <svg class="s2" viewBox="0 0 28 36"><path d="M5 18V10Q6 2 14 2Q22 2 23 10V18" fill="none" stroke="#9a9a96" stroke-width="4"/><rect x="1" y="17" width="26" height="18" rx="3" fill="#5a5a5a"/></svg>
      <span class="lab l3">확대경</span><div class="field f3"><span>100%</span><div class="spin"><em class="up"></em><em></em></div></div>
      <span class="lab l4">회전</span><div class="field f4"><span>0.0 °</span><div class="spin"><em class="up"></em><em></em></div></div>
      <div class="check"><svg viewBox="0 0 20 24"><path d="M3 12L8 20L17 3" fill="none" stroke="#111" stroke-width="3.200"/></svg></div>
      <span class="lab l5">렌더링</span>
      <svg class="s3" viewBox="0 0 24 24"><circle cx="12" cy="12" r="11" fill="#8c8c8c"/><path d="M1 12H23M12 1V23M3 6.500H21M3 17.500H21" stroke="#d8d8d8" fill="none"/><ellipse cx="12" cy="12" rx="5.500" ry="11" fill="none" stroke="#d8d8d8"/></svg>
      <span class="lab l6">EPSG:4326</span>
      <svg class="s4" viewBox="0 0 34 34"><path d="M16 1A15 15 0 0 1 26 27Q28 31 32 33Q24 34 20 30A15 15 0 1 1 16 1Z" fill="#636363"/><path d="M8 16H12M14.500 16H18.500M21 16H25" stroke="#fff" stroke-width="5"/></svg>
      <svg class="s5" viewBox="0 0 20 20"><path d="M0 17H4M8 17H12M16 17H20M8 10H12M16 10H20M16 3H20" stroke="#b4b4b4" stroke-width="3"/></svg>
    </footer>
  </section>

  <svg class="marks" viewBox="0 0 4515 1773">
    <g stroke="#f00" fill="none">
      <g stroke-width="7"><path d="M6 660.500H1299"/><path d="M1.500 1064.500H1296"/><path d="M1 1454.500H1293"/></g>
      <g stroke-width="2.200"><path d="M1299 661L2046 1237"/><path d="M1296 1065L2015 1311"/><path d="M1293 1454L2007 1383.500"/></g>
      <g stroke-width="4.600" stroke-dasharray="13.800 4.600">
        <rect x="128.500" y="599.300" width="92.500" height="66" rx="12"/>
        <rect x="267" y="1003.300" width="92" height="66" rx="12"/>
        <rect x="179.500" y="1383.300" width="91.500" height="66" rx="12"/>
      </g>
      <path stroke-width="10" d="M1919 1080V1068Q1919 1056 1931 1056H1945M1955.500 1056H1986M1996.500 1056H2027.500M2038 1056H2058Q2065 1056 2068 1062M2067 1072V1103M2059 1109H2028M2017.500 1109H1987M1976.500 1109H1946M1935 1109H1931Q1919 1109 1919 1097V1090"/>
    </g>
    <g fill="#f00"><path d="M2066.500 1253L2053.500 1226.500L2037 1248Z"/><path d="M2038 1319.700L2017 1298.500L2008.300 1324Z"/><path d="M2032 1381L2004 1370L2006.800 1397Z"/></g>
  </svg>
</main>
</body>
</html>
```
FILE: styles.css
```css
* { box-sizing: border-box; }
body { margin: 0; background: #fff; overflow: hidden; font-family: "Noto Sans CJK KR", sans-serif; }
.defs { position: absolute; }
svg { display: block; flex: none; overflow: visible; }
i, b, em { font-style: normal; font-weight: normal; display: block; flex: none; }

.stage { position: relative; zoom: .9072; width: 4515px; height: 1773px; display: flex; overflow: hidden; }
.marks { position: absolute; left: 0; top: 0; width: 4515px; height: 1773px; }

/* File list */
.files { width: 1958px; flex: none; padding-top: 399px; }
.row { display: grid; grid-template-columns: 64px 755px 453px 380px 203px; align-items: center; height: 66.120px; padding-left: 10px; font-size: 38.500px; line-height: 60px; color: #6d6d6d; white-space: nowrap; }
.row svg { width: 51px; height: 51px; }
.row span { padding-top: 3px; }
.name { color: #000; letter-spacing: -1.300px; }
.name.ko { letter-spacing: .2px; }
.name.long { letter-spacing: .9px; word-spacing: 4px; }
.date { letter-spacing: .5px; word-spacing: 5px; }
.type { word-spacing: 4px; }
.type.latin { letter-spacing: -1px; }
.size { text-align: right; letter-spacing: -.9px; }
.t-shx { font: bold 21px "Liberation Sans", sans-serif; fill: #fff; }
.t-csv { font: bold 24px "Liberation Sans", sans-serif; fill: #33c481; }

/* The application window is drawn square, then narrowed */
.qgis { width: 3068.400px; height: 1773px; flex: none; margin-right: -600px; transform: scaleX(.83333); transform-origin: 0 0; background: #f0f0f0; display: flex; flex-direction: column; font-size: 24px; }
.titlebar { height: 58px; background: #fff; display: flex; align-items: center; padding: 0 25px 6px 11px; }
.logo { width: 32px; height: 30px; }
.caption { color: #999; margin-left: 12px; flex: 1; font-size: 25px; letter-spacing: .45px; white-space: nowrap; }
.win { width: 20px; height: 20px; }
.win + .win { margin-left: 71px; }
.menu { height: 40px; border-bottom: 3px solid #d9d9d9; display: grid; grid-template-columns: 157px 112.600px 116.400px 136.500px 115.200px 161.800px 118.900px 139.300px 213.300px 99.500px 121.500px 172.600px auto; align-items: center; padding-left: 17px; color: #a0a0a0; font-size: 25px; line-height: 36px; white-space: nowrap; }
.menu u { text-underline-offset: 3px; text-decoration-thickness: 2px; }

.toolbar { height: 77px; border-bottom: 3px solid #bcbcbc; background: linear-gradient(#fafafa, #eee); display: flex; align-items: center; }
.toolbar b { width: 66.300px; height: 61px; display: flex; align-items: center; justify-content: center; border-radius: 5px; }
.toolbar b svg { width: 48px; height: 48px; }
.toolbar .boxed { width: 62.300px; margin: 0 2px; background: #fcfcfc; border: 2px solid #b0b0b0; }
.toolbar .pressed { width: 62.300px; margin: 0 2px; background: #dcdcdc; border: 2px solid #acacac; }
.off svg, svg.off { opacity: .36; filter: grayscale(.6); }
.grip { width: 32.300px; height: 35px; padding-left: 14px; background-image: radial-gradient(circle, #a8a8a8 1.500px, transparent 1.900px), radial-gradient(circle, #a8a8a8 1.500px, transparent 1.900px); background-size: 6px 7px; background-repeat: repeat-y; background-position: 0 0, 7px 0; background-clip: content-box; background-origin: content-box; }
.grip.first { width: 21px; padding-left: 4px; }
.rule { width: 2px; height: 54px; background: #d2d2d2; margin: 0 6px; }
em { width: 0; height: 0; border: 7px solid transparent; border-top: 9px solid #444; border-bottom: 0; margin: 0 7px 0 4px; }
em.dim { border-top-color: #999; }
em.up { border-top: 0; border-bottom: 9px solid #555; }

.work { flex: 1; display: flex; min-height: 0; }
.docks { width: 586px; flex: none; display: flex; flex-direction: column; }
.docktitle { display: flex; align-items: center; height: 37px; padding: 0 4px; font-size: 25px; letter-spacing: 1px; line-height: 36px; }
.docktitle span { flex: 1; }
.docktitle svg { width: 23px; height: 23px; margin-left: 5px; }
.docktools { display: flex; align-items: center; height: 64px; padding-left: 11px; gap: 18.500px; }
.docktools svg { width: 32px; height: 32px; }
.docktools em { margin: 0 1px 0 -12px; }
.browser { height: 801px; display: flex; flex-direction: column; }
.tree { list-style: none; margin: 0; padding: 1px 0 0; flex: 1; background: #fff; border: 2px solid #b8b8b8; border-left: 0; }
.tree li { display: flex; align-items: center; height: 35.720px; padding-left: 44px; font-size: 23.500px; line-height: 35px; letter-spacing: -.4px; color: #000; }
.tree li.wide { letter-spacing: .6px; }
.tree li svg { width: 32px; height: 32px; margin-right: 14px; }
.won { margin-left: 1px; font-size: 25px; }
.more::before { content: ""; width: 0; margin-left: -30px; margin-right: 21px; border: 8px solid transparent; border-left: 9px solid #4c4c4c; border-right: 0; }
.layers { flex: 1; display: flex; flex-direction: column; }
.splitdots { width: 32px; height: 13px; margin-left: 277px; background: radial-gradient(circle, #b0b0b0 1.300px, transparent 1.700px) 0 2px / 5.300px 6px repeat-x; }
.layers .docktools { height: 62px; }
.layerbox { flex: 1; background: #fff; border: 2px solid #b8b8b8; border-left: 0; }

.center { flex: 1; display: flex; flex-direction: column; margin-left: 12px; }
h1 { margin: 0; height: 52px; padding-left: 17px; font-size: 33px; font-weight: 500; letter-spacing: 3.200px; line-height: 40px; white-space: nowrap; }
.recent { height: 1350px; background: #fff; border: 3px solid #bebebe; border-right: 0; border-left-width: 2px; }
.message { margin-top: 11px; height: 53px; background: #dff0d8; border: 3px solid #919f8d; border-right: 0; border-left-width: 2px; display: flex; align-items: center; justify-content: space-between; padding-left: 10px; }
.message p { margin: 0; padding-top: 3px; font-size: 25px; line-height: 40px; white-space: nowrap; letter-spacing: -.35px; }
.message strong { letter-spacing: 3.300px; }
.message a { color: #2c8a00; text-decoration: underline; text-underline-offset: 4px; }
.btns { width: 19px; display: flex; flex-direction: column; gap: 4px; padding-top: 3px; }
.btns i { height: 19px; border: 2px solid #fff; border-right: 0; border-bottom: 3px solid #777; }

.status { height: 56px; display: flex; align-items: center; }
.status > * { flex: none; }
.locator { width: 718px; height: 44px; margin-left: 4px; background: #fff; border: 2px solid #b0b0b0; border-radius: 6px; display: flex; align-items: center; padding-left: 15px; color: #888; font-size: 24px; letter-spacing: 1.400px; white-space: nowrap; }
.locator svg { width: 20px; height: 28px; margin-right: 23px; }
.lab { font-size: 24px; line-height: 40px; white-space: nowrap; letter-spacing: -.3px; }
.l1 { width: 50px; margin-left: 798px; }
.l2 { width: 51px; }
.l3 { width: 71px; }
.l4 { width: 63px; }
.l5 { width: 100px; }
.l6 { width: 159px; }
.field { height: 44px; background: #fff; border: 2px solid #b0b0b0; border-radius: 5px; display: flex; justify-content: space-between; align-items: stretch; padding-left: 6px; line-height: 40px; letter-spacing: -.6px; }
.f1 { width: 216px; }
.f2 { width: 162px; }
.f3 { width: 178px; height: 40px; line-height: 36px; margin-right: 17px; }
.f4 { width: 170px; height: 40px; line-height: 36px; margin-right: 13px; }
.drop { width: 39px; border-left: 2px solid #c4c4c4; background: #f6f6f6; display: flex; align-items: center; justify-content: center; }
.spin { width: 28px; border-left: 2px solid #c4c4c4; background: #f6f6f6; display: flex; flex-direction: column; align-items: center; justify-content: space-evenly; }
.drop em, .spin em { margin: 0; border-top-color: #555; }
.spin em.up { border-top: 0; }
.s1 { width: 32px; height: 34px; margin: 0 26px 0 9px; }
.s2 { width: 26px; height: 32px; margin: 0 18px 0 24px; }
.check { width: 27px; height: 28px; background: #fff; border: 2px solid #c8c8c8; margin-right: 13px; display: flex; justify-content: center; align-items: center; }
.check svg { width: 18px; height: 22px; }
.s3 { width: 31px; height: 29px; margin-right: 9px; }
.s4 { width: 34px; height: 31px; }
.s5 { width: 20px; height: 20px; margin-left: auto; align-self: flex-end; margin-bottom: 2px; }

.t-a { font: 11px "Open Sans", sans-serif; fill: #333; }
.t-11 { font: bold 8.500px "Liberation Sans", sans-serif; fill: #444; }
.t-i { font: italic bold 17px "Liberation Serif", serif; fill: #fff; }
.t-t { font: 14px "Liberation Serif", serif; fill: #333; stroke: #333; stroke-width: .4; }
.t-abc { font: 8.500px "Open Sans", sans-serif; fill: #333; }
.t-ab { font: 8.500px "Open Sans", sans-serif; fill: #222; }
.t-q { font: 15px "Liberation Serif", serif; fill: #fff; }
.t-db2 { font: 9.500px "Open Sans", sans-serif; fill: #e4eef8; }
.t-eps { font: 20px "Liberation Serif", serif; fill: #666; }
```
